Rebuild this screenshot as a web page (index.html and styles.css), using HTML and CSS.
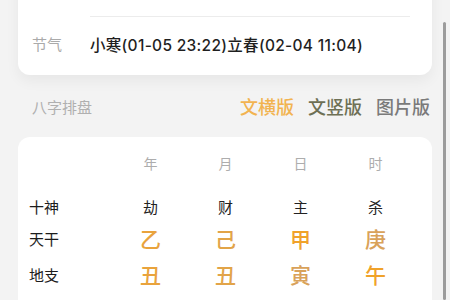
FILE: index.html
```html
<!DOCTYPE html>
<html lang="zh">
<head>
<meta charset="utf-8">
<link rel="stylesheet" href="styles.css">
</head>
<body>
<div class="page">
  <div class="card info">
    <div class="info-row hidden-row">
      <span class="info-label">农历</span>
      <span class="info-value">乙丑年 腊月 廿三</span>
    </div>
    <div class="divider"></div>
    <div class="info-row last-row">
      <span class="info-label">节气</span>
      <span class="info-value">小寒(01-05 23:22)立春(02-04 11:04)</span>
    </div>
  </div>

  <div class="section-head">
    <span class="section-title">八字排盘</span>
    <div class="tabs">
      <span class="tab tab-active">文横版</span>
      <span class="tab tab-alt">文竖版</span>
      <span class="tab tab-plain">图片版</span>
    </div>
  </div>

  <div class="card chart">
    <div class="grid head-row">
      <span></span>
      <span class="col">年</span>
      <span class="col">月</span>
      <span class="col">日</span>
      <span class="col">时</span>
    </div>
    <div class="grid row">
      <span class="label">十神</span>
      <span class="col god">劫</span>
      <span class="col god">财</span>
      <span class="col god">主</span>
      <span class="col god">杀</span>
    </div>
    <div class="grid row">
      <span class="label">天干</span>
      <span class="col big c1">乙</span>
      <span class="col big c2">己</span>
      <span class="col big c3">甲</span>
      <span class="col big c4">庚</span>
    </div>
    <div class="grid row row-tall">
      <span class="label">地支</span>
      <span class="col big c1">丑</span>
      <span class="col big c2">丑</span>
      <span class="col big c4">寅</span>
      <span class="col big c3">午</span>
    </div>
    <div class="grid row">
      <span class="label">藏干</span>
      <span class="col small">己癸辛</span>
      <span class="col small">己癸辛</span>
      <span class="col small">甲丙戊</span>
      <span class="col small">丁己</span>
    </div>
  </div>
</div>
<div class="scrollbar"></div>
</body>
</html>
```

FILE: styles.css
```css
html, body {
  margin: 0;
  padding: 0;
  height: 100%;
  overflow: hidden;
  background: #f3f3f3;
  font-family: "Noto Sans CJK SC", "Noto Sans", sans-serif;
}

.page {
  padding: 0 18px;
}

.card {
  background: #ffffff;
  border-radius: 12px;
}

.info {
  margin-top: -40px;
  box-shadow: 0 6px 14px rgba(0, 0, 0, 0.05);
}

.info-row {
  display: flex;
  align-items: center;
  height: 56px;
  padding-left: 14px;
}

.last-row {
  height: 58px;
  padding-bottom: 5px;
  box-sizing: border-box;
}

.info-label {
  width: 58px;
  font-size: 15px;
  color: #aaaaaa;
}

.info-value {
  font-family: "Inter", "Noto Sans CJK SC", sans-serif;
  font-size: 15.5px;
  font-weight: 500;
  color: #1f1f1f;
  letter-spacing: 0.3px;
}

.divider {
  height: 1px;
  background: #ececec;
  margin-left: 72px;
  margin-right: 22px;
}

.section-head {
  display: flex;
  align-items: center;
  justify-content: space-between;
  height: 62px;
  padding: 0 2px 0 14px;
}

.section-title {
  font-size: 15px;
  color: #b0b0b0;
}

.tabs {
  display: flex;
  gap: 14px;
}

.tab {
  font-size: 18px;
  font-weight: 500;
}

.tab-active { color: #f2b350; }
.tab-alt { color: #6e7055; }
.tab-plain { color: #7a7a7a; }

.chart {
  padding: 14px 0 0 11px;
  height: 200px;
}

.grid {
  display: grid;
  grid-template-columns: 84px repeat(4, 75px);
  align-items: center;
}

.head-row {
  height: 24px;
  margin-bottom: 15px;
  font-size: 14px;
  color: #adadad;
}

.row {
  height: 32px;
}

.row-tall {
  height: 40px;
}

.label {
  font-size: 15px;
  color: #1c1c1c;
}

.col {
  text-align: center;
}

.god {
  font-size: 15px;
  color: #222222;
}

.big {
  font-size: 21px;
  font-weight: 500;
}

.small {
  font-size: 14px;
  color: #999999;
}

.c1 { color: #e9a33c; }
.c2 { color: #e2a448; }
.c3 { color: #f0a22a; }
.c4 { color: #d9a25a; }

.scrollbar {
  position: absolute;
  left: 443px;
  top: 22px;
  bottom: 0;
  width: 3px;
  background: #9c9c9c;
  border-radius: 2px;
}
```
